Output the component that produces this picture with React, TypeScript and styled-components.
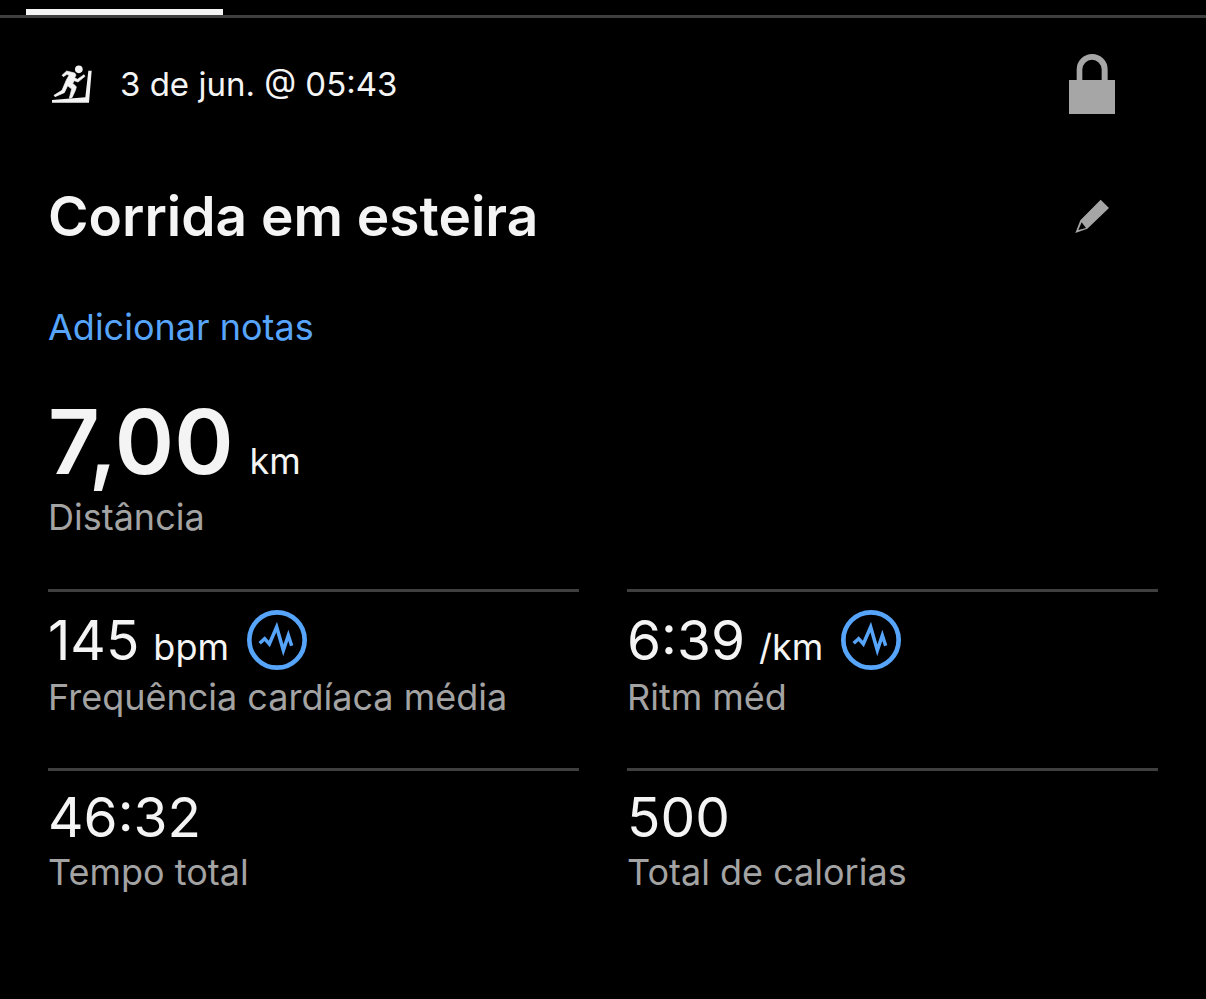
import React from "react";
import styled, { createGlobalStyle } from "styled-components";

const GlobalStyle = createGlobalStyle`
  * { box-sizing: border-box; }
  html, body { margin: 0; min-height: 100%; background: #000; }
  body { font-family: Inter, "Liberation Sans", sans-serif; color: #f4f4f4; }
`;

const TabBar = styled.div`
  padding: 9px 26px 0;
  border-bottom: 3px solid #3f3f3f;
`;

const TabIndicator = styled.div`
  width: 197px;
  height: 6px;
  background: #f4f4f4;
`;

const Content = styled.main`
  padding: 36px 48px;
`;

const HeaderRow = styled.header`
  display: flex;
  align-items: center;
  justify-content: space-between;
  padding-right: 36px;
`;

const TitleRow = styled(HeaderRow).attrs({ as: "div" })`
  margin-top: 68px;
`;

const Activity = styled.div`
  display: flex;
  align-items: center;
  gap: 28px;
  padding-left: 4px;
  font-size: 33px;
  line-height: 44px;
`;

const IconButton = styled.button`
  display: flex;
  align-items: center;
  justify-content: center;
  width: 60px;
  height: 60px;
  padding: 0;
  border: 0;
  background: none;
  color: #a6a6a6;
  cursor: pointer;
`;

const Title = styled.h1`
  margin: 0;
  font-size: 55px;
  font-weight: 600;
  line-height: 68px;
`;

const NotesLink = styled.a`
  display: block;
  width: fit-content;
  margin-top: 55px;
  font-size: 36px;
  line-height: 44px;
  color: #57a5fa;
  text-decoration: none;
`;

const Distance = styled.section`
  margin: 45px 0 50px;
`;

const Figure = styled.div<{ $large?: boolean }>`
  display: flex;
  align-items: baseline;
  gap: ${(p) => (p.$large ? 16 : 14)}px;
  font-size: ${(p) => (p.$large ? 90 : 55)}px;
  font-weight: ${(p) => (p.$large ? 600 : 400)};
  line-height: ${(p) => (p.$large ? 96 : 56)}px;
`;

const Unit = styled.span`
  font-size: 36px;
  font-weight: 400;
  line-height: 36px;
`;

const Label = styled.div`
  margin-top: 5px;
  font-size: 36px;
  line-height: 44px;
  color: #a3a3a3;
`;

const Stats = styled.section`
  display: grid;
  grid-template-columns: 1fr 1fr;
  column-gap: 48px;
`;

const Stat = styled.div`
  padding: 18px 0 49px;
  border-top: 3px solid #3f3f3f;
`;

const StatTop = styled.div`
  display: flex;
  align-items: center;
  gap: 18px;
`;

const ChartButton = styled(IconButton)`
  color: #57a5fa;
`;

const TreadmillIcon = () => (
  <svg width="40" height="38" viewBox="36 30 120 114" fill="currentColor" aria-hidden="true">
    <circle cx="116.500" cy="43" r="11.500" />
    <path d="M36 135L136 127L145 47H155L147 143.500H36Z" />
    <path
      d="M66 61L80 48L104 54L108 60L104 68L112 73L132 59L135 64L114 81L103 77L98 85L109 95L107 104L96 128L88 130L95 102L83 92L73 113L45 125L42 121L66 106L79 75L87 61L81 58L70 65Z"
      stroke="currentColor"
      strokeWidth="2"
    />
  </svg>
);

const LockIcon = () => (
  <svg width="46" height="60" viewBox="57 42 138 180" fill="currentColor" aria-hidden="true">
    <path d="M57 120H80V88.500A46.500 46.500 0 0 1 173 88.500V120H195V222H57ZM97 120H155V88.500A29 29 0 0 0 97 88.500Z" />
  </svg>
);

const PencilIcon = () => (
  <svg width="36" height="35" viewBox="44 42 108 105" fill="currentColor" fillRule="evenodd" aria-hidden="true">
    <path d="M124 44L149 69L84 131L48 144L63 106ZM67 112L57 135L80 129Z" />
  </svg>
);

const WaveIcon = () => (
  <svg width="60" height="60" viewBox="0 0 180 180" fill="none" stroke="currentColor" aria-hidden="true">
    <circle cx="90" cy="90" r="83" strokeWidth="14" />
    <path d="M38 100L53 86L67 102L89 51L109 121L124 76L134 107" strokeWidth="10.500" strokeMiterlimit="10" />
  </svg>
);

type StatData = { value: string; unit?: string; label: string };

const stats: StatData[] = [
  { value: "145", unit: "bpm", label: "Frequência cardíaca média" },
  { value: "6:39", unit: "/km", label: "Ritm méd" },
  { value: "46:32", label: "Tempo total" },
  { value: "500", label: "Total de calorias" },
];

export default function App() {
  return (
    <>
      <GlobalStyle />
      <TabBar>
        <TabIndicator />
      </TabBar>
      <Content>
        <HeaderRow>
          <Activity>
            <TreadmillIcon />
            <time>3 de jun. @ 05:43</time>
          </Activity>
          <IconButton aria-label="Privacidade">
            <LockIcon />
          </IconButton>
        </HeaderRow>
        <TitleRow>
          <Title>Corrida em esteira</Title>
          <IconButton aria-label="Editar">
            <PencilIcon />
          </IconButton>
        </TitleRow>
        <NotesLink href="#notas">Adicionar notas</NotesLink>
        <Distance>
          <Figure $large>
            7,00 <Unit>km</Unit>
          </Figure>
          <Label>Distância</Label>
        </Distance>
        <Stats>
          {stats.map(({ value, unit, label }) => (
            <Stat key={label}>
              <StatTop>
                <Figure>
                  {value} {unit && <Unit>{unit}</Unit>}
                </Figure>
                {unit && (
                  <ChartButton aria-label={`Gráfico: ${label}`}>
                    <WaveIcon />
                  </ChartButton>
                )}
              </StatTop>
              <Label>{label}</Label>
            </Stat>
          ))}
        </Stats>
      </Content>
    </>
  );
}
